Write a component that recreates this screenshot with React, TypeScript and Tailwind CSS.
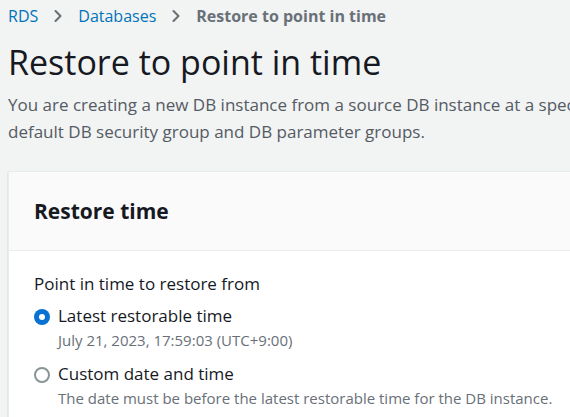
import { ChevronRight } from "lucide-react";

const FONT = "font-['Open_Sans',sans-serif]";

function Radio({ checked }: { checked: boolean }) {
  return checked ? (
    <span className="flex h-4 w-4 shrink-0 items-center justify-center rounded-full bg-[#0972d3]">
      <span className="block h-1.5 w-1.5 rounded-full bg-white" />
    </span>
  ) : (
    <span className="block h-4 w-4 shrink-0 rounded-full border-2 border-[#879596] bg-white" />
  );
}

export default function App() {
  return (
    <div className={`${FONT} h-[417px] w-[570px] overflow-hidden bg-[#f2f3f3] text-[#16191f]`}>
      {/* Breadcrumbs */}
      <nav className="flex items-center pl-2 pt-[5px] text-[16px] leading-[22px]">
        <span className="text-[#0073bb]">RDS</span>
        <ChevronRight className="mx-[10px] h-5 w-5 text-[#687078]" strokeWidth={2.5} />
        <span className="text-[#0073bb]">Databases</span>
        <ChevronRight className="mx-[10px] h-5 w-5 text-[#687078]" strokeWidth={2.5} />
        <span className="font-bold text-[#687078]">Restore to point in time</span>
      </nav>

      <h1 className="mt-[13px] pl-2 text-[34px] leading-[44px] whitespace-nowrap">
        Restore to point in time
      </h1>
      <p className="mt-[7px] pl-2 text-[17px] leading-[27px] whitespace-nowrap text-[#545b64]">
        You are creating a new DB instance from a source DB instance at a specified time. This new DB instance will have the
        <br />
        default DB security group and DB parameter groups.
      </p>

      <section className="ml-2 mt-[26px] w-[600px] border-l border-t border-[#e9ebed] shadow-[0_1px_1px_rgba(0,28,36,0.3)]">
        <div className="flex h-[79px] items-center border-b border-[#eaeded] bg-[#fafafa] pl-[25px]">
          <h2 className="text-[21px] font-bold leading-[28px]">Restore time</h2>
        </div>
        <div className="bg-white pb-6 pl-[25px] pt-[21px]">
          <div className="text-[17px] leading-[24px]">Point in time to restore from</div>
          <div className="mt-[8px] flex flex-col gap-[11px]">
            <label className="flex items-start gap-2">
              <span className="mt-[5px] block">
                <Radio checked />
              </span>
              <span>
                <span className="block text-[17px] leading-[24px]">Latest restorable time</span>
                <span className="mt-px block text-[15px] leading-[22px] text-[#687078]">
                  July 21, 2023, 17:59:03 (UTC+9:00)
                </span>
              </span>
            </label>
            <label className="flex items-start gap-2">
              <span className="mt-[5px] block">
                <Radio checked={false} />
              </span>
              <span>
                <span className="block text-[17px] leading-[24px]">Custom date and time</span>
                <span className="mt-px block whitespace-nowrap text-[15px] leading-[22px] text-[#687078]">
                  The date must be before the latest restorable time for the DB instance.
                </span>
              </span>
            </label>
          </div>
        </div>
      </section>
    </div>
  );
}
